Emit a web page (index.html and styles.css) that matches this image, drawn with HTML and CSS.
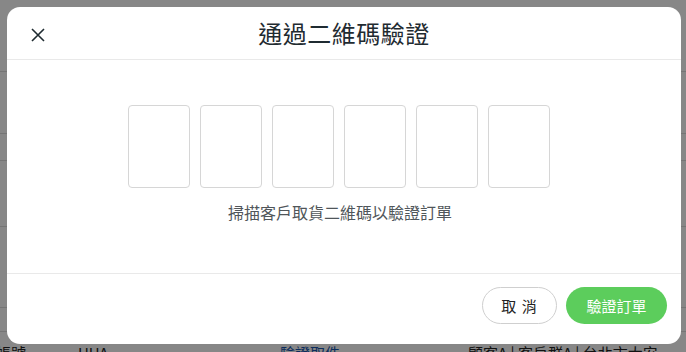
FILE: index.html
```html
<!DOCTYPE html>
<html lang="zh-Hant">
<head>
    <meta charset="UTF-8">
    <meta name="viewport" content="width=device-width, initial-scale=1.0">
    <title>通過二維碼驗證</title>
    <link rel="stylesheet" href="styles.css">
</head>
<body>

    <div class="page">
        <div class="row r1"></div>
        <div class="row r2"></div>
        <div class="row r3"></div>
        <div class="row r4"></div>
        <div class="row r5"></div>
        <div class="row r6"></div>
        <div class="row order">
            <span class="cell c1">聯絡帳號</span>
            <span class="cell c2">UUA</span>
            <span class="cell c3 link">驗證取件</span>
            <span class="cell c4">顧客A | 客戶群A | 台北市大安</span>
        </div>
    </div>

    <div class="overlay"></div>

    <div class="modal">
        <div class="modal-header">
            <button class="close-btn" aria-label="關閉">
                <svg width="14" height="14" viewBox="0 0 14 14">
                    <path d="M1 1 L13 13 M13 1 L1 13" stroke="#1f2b31" stroke-width="1.6" fill="none"/>
                </svg>
            </button>
            <h2>通過二維碼驗證</h2>
        </div>

        <div class="modal-body">
            <div class="code-boxes">
                <input type="text" maxlength="1">
                <input type="text" maxlength="1">
                <input type="text" maxlength="1">
                <input type="text" maxlength="1">
                <input type="text" maxlength="1">
                <input type="text" maxlength="1">
            </div>
            <p class="hint">掃描客戶取貨二維碼以驗證訂單</p>
        </div>

        <div class="modal-footer">
            <button class="btn btn-cancel">取 消</button>
            <button class="btn btn-confirm">驗證訂單</button>
        </div>
    </div>

</body>
</html>
```

FILE: styles.css
```css
* {
    margin: 0px;
    padding: 0px;
    box-sizing: border-box;
}

body {
    font-family: 'Noto Sans CJK TC', 'Noto Sans', sans-serif;
    background: #fff;
    width: 686px;
    height: 352px;
    overflow: hidden;
    position: relative;
}

/* page behind the dialog */
.page {
    height: 352px;
    overflow: hidden;
    display: flex;
    flex-direction: column;
}

.row {
    flex-shrink: 0;
    border-bottom: 1px solid #ddd;
}

.r1 { height: 72px; }
.r2 { height: 62px; }
.r3 { height: 27px; }
.r4 { height: 66px; }
.r5 { height: 81px; }
.r6 { height: 24px; }

.row.order {
    height: 30px;
    display: flex;
    align-items: flex-start;
    padding-top: 11px;
    border-bottom: none;
    font-size: 15px;
    color: #222;
    white-space: nowrap;
}

.cell {
    display: block;
    line-height: 20px;
}

.c1 { margin-left: -34px; width: 112px; }
.c2 { width: 202px; }
.c3 { width: 188px; }
.link { color: #1a56b0; }

.overlay {
    position: absolute;
    inset: 0;
    background: rgba(0, 0, 0, 0.47);
}

.modal {
    position: absolute;
    left: 7px;
    top: 7px;
    width: 674px;
    height: 337px;
    background: #fff;
    border-radius: 13px;
    display: flex;
    flex-direction: column;
}

.modal-header {
    height: 53px;
    border-bottom: 1px solid #e9e9e9;
    display: flex;
    align-items: center;
    justify-content: center;
    position: relative;
}

.modal-header h2 {
    font-size: 24px;
    font-weight: 400;
    color: #1f2b31;
    letter-spacing: 0.5px;
    margin-top: -1px;
}

.close-btn {
    position: absolute;
    left: 24px;
    top: 21px;
    background: none;
    border: none;
    width: 14px;
    height: 14px;
    cursor: pointer;
}

.close-btn svg {
    display: block;
}

.modal-body {
    height: 214px;
    border-bottom: 1px solid #e9e9e9;
    display: flex;
    flex-direction: column;
    align-items: center;
    padding-top: 45px;
    padding-right: 8px;
}

.code-boxes {
    display: flex;
    gap: 10px;
    margin-right: 2px;
}

.code-boxes input {
    width: 62px;
    height: 83px;
    border: 1px solid #d6d6d6;
    border-radius: 4px;
    text-align: center;
    font-size: 28px;
    outline: none;
}

.hint {
    margin-top: 12px;
    font-size: 16px;
    color: #50565a;
    line-height: 24px;
}

.modal-footer {
    flex: 1;
    display: flex;
    justify-content: flex-end;
    align-items: flex-start;
    gap: 9px;
    padding: 13px 14px 0 0;
}

.btn {
    height: 37px;
    border-radius: 19px;
    font-family: inherit;
    font-size: 15px;
    cursor: pointer;
}

.btn-cancel {
    width: 75px;
    background: #fff;
    border: 1px solid #cfcfcf;
    color: #222;
    letter-spacing: 1px;
}

.btn-confirm {
    width: 101px;
    background: #5ccd5c;
    border: none;
    color: #fff;
}
```
